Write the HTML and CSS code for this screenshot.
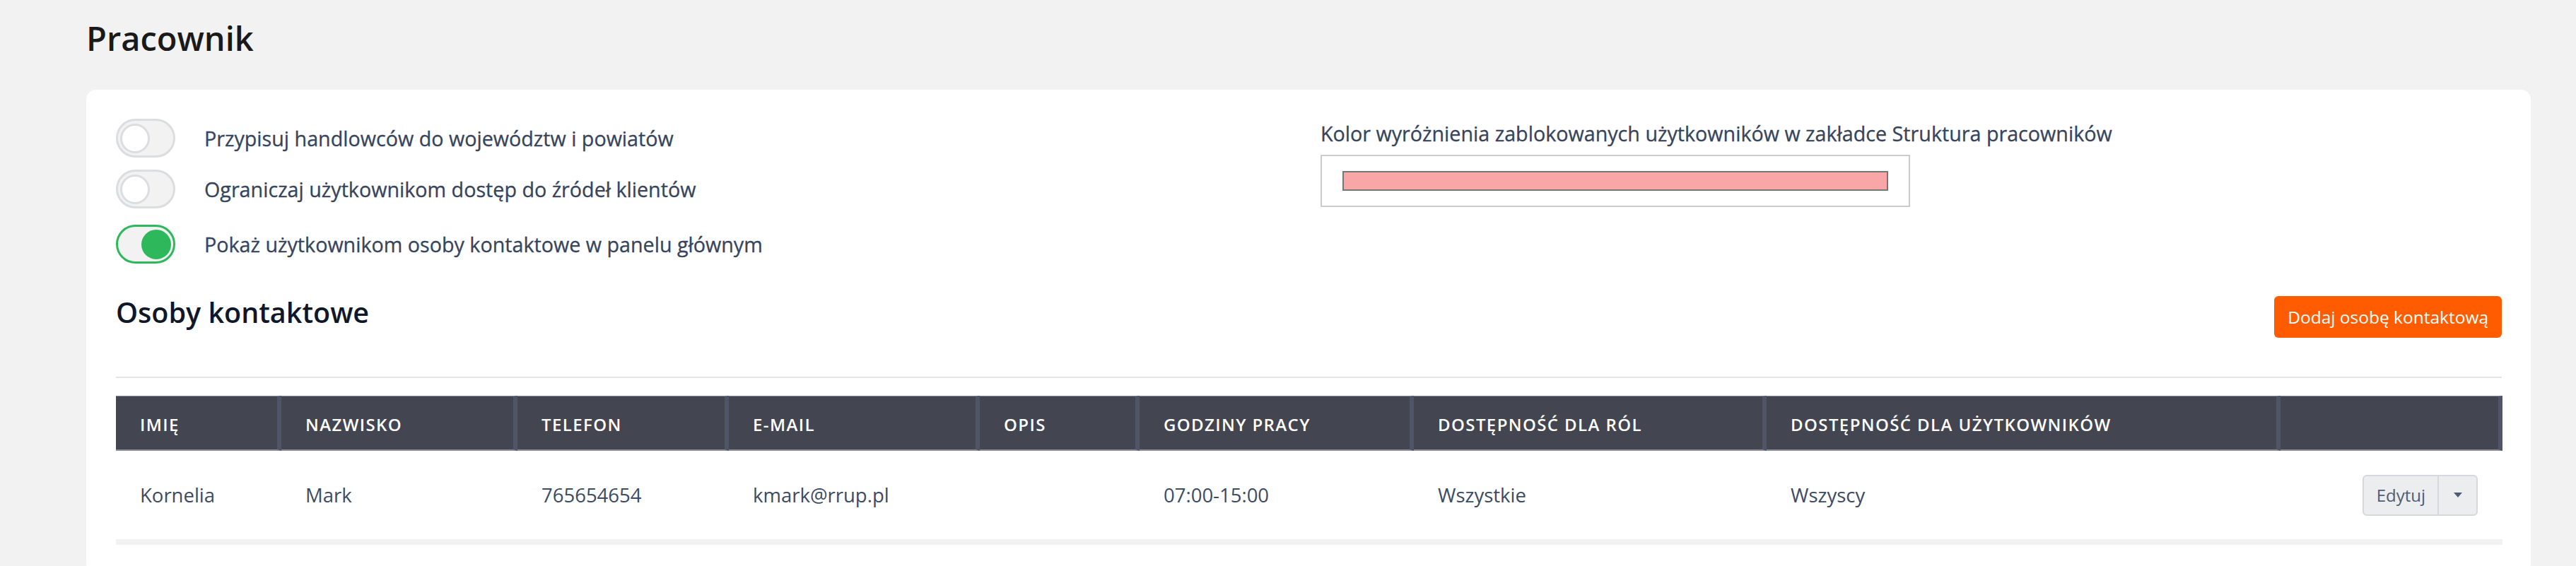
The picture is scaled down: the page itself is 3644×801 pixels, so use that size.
FILE: index.html
```html
<!DOCTYPE html>
<html lang="pl">
<head>
<meta charset="utf-8">
<title>Pracownik</title>
<link rel="stylesheet" href="styles.css">
</head>
<body>
<div class="page">
  <h1 class="title">Pracownik</h1>
  <div class="card">
    <div class="settings">
      <div class="toggles">
        <div class="toggle-row">
          <span class="switch"><span class="knob"></span></span>
          <span class="label">Przypisuj handlowców do województw i powiatów</span>
        </div>
        <div class="toggle-row">
          <span class="switch"><span class="knob"></span></span>
          <span class="label">Ograniczaj użytkownikom dostęp do źródeł klientów</span>
        </div>
        <div class="toggle-row last">
          <span class="switch on"><span class="knob"></span></span>
          <span class="label">Pokaż użytkownikom osoby kontaktowe w panelu głównym</span>
        </div>
      </div>
      <div class="color-field">
        <div class="label">Kolor wyróżnienia zablokowanych użytkowników w zakładce Struktura pracowników</div>
        <div class="color-box"><div class="swatch"></div></div>
      </div>
    </div>

    <div class="section-head">
      <h2 class="section-title">Osoby kontaktowe</h2>
      <button class="btn-add">Dodaj osobę kontaktową</button>
    </div>
    <div class="divider"></div>

    <table class="grid">
      <colgroup>
        <col class="w1"><col class="w2"><col class="w3"><col class="w4"><col class="w5"><col class="w6"><col class="w7"><col class="w8"><col class="w9">
      </colgroup>
      <thead>
        <tr>
          <th>Imię</th>
          <th>Nazwisko</th>
          <th>Telefon</th>
          <th>E-mail</th>
          <th>Opis</th>
          <th>Godziny pracy</th>
          <th>Dostępność dla ról</th>
          <th>Dostępność dla użytkowników</th>
          <th></th>
        </tr>
      </thead>
      <tbody>
        <tr>
          <td>Kornelia</td>
          <td>Mark</td>
          <td>765654654</td>
          <td>kmark@rrup.pl</td>
          <td></td>
          <td>07:00-15:00</td>
          <td>Wszystkie</td>
          <td>Wszyscy</td>
          <td class="actions">
            <span class="btn-group"><span class="btn-edit">Edytuj</span><span class="btn-caret"><span class="caret"></span></span></span>
          </td>
        </tr>
      </tbody>
    </table>
  </div>
</div>
</body>
</html>
```

FILE: styles.css
```css
html, body {
  margin: 0;
  padding: 0;
  background: #f2f2f2;
  font-family: "Open Sans", "Noto Sans", "Liberation Sans", sans-serif;
  color: #3c4b64;
}

.page {
  padding: 21px 64px 0 122px;
}

.title {
  margin: 0 0 40px 0;
  font-size: 47px;
  line-height: 66px;
  font-weight: 600;
  color: #1a1a1a;
}

.card {
  background: #ffffff;
  border-radius: 14px;
  padding: 41px 41px 40px 42px;
}

.settings {
  display: grid;
  grid-template-columns: 1704px 1fr;
}

.toggles {
  display: flex;
  flex-direction: column;
}

.toggle-row {
  display: flex;
  align-items: center;
  gap: 41px;
  height: 55px;
  margin-bottom: 17px;
}

.toggle-row.last {
  margin-top: 6px;
  margin-bottom: 0;
}

.switch {
  box-sizing: border-box;
  width: 84px;
  height: 55px;
  flex: none;
  border: 3px solid #dcdde1;
  border-radius: 28px;
  background: #f2f2f2;
  display: flex;
  align-items: center;
  padding: 0 3px;
}

.knob {
  box-sizing: border-box;
  width: 42px;
  height: 42px;
  border-radius: 50%;
  background: #ffffff;
  border: 3px solid #dcdde1;
}

.switch.on {
  border-color: #2eb85c;
  justify-content: flex-end;
}

.switch.on .knob {
  background: #2eb85c;
  border-color: #2eb85c;
}

.label {
  font-size: 28.7px;
  line-height: 40px;
  font-weight: 500;
  color: #36445c;
  white-space: nowrap;
  -webkit-text-stroke: 0.3px #36445c;
}

.color-field {
  display: flex;
  flex-direction: column;
  align-items: flex-start;
  padding-top: 1px;
}

.color-box {
  box-sizing: border-box;
  margin-top: 10px;
  width: 834px;
  height: 74px;
  border: 2px solid #cccccc;
  padding: 21px 29px;
}

.swatch {
  box-sizing: border-box;
  height: 28px;
  border: 2px solid #767676;
  background: #f9a6a6;
}

.section-head {
  display: flex;
  justify-content: space-between;
  align-items: flex-start;
  margin-top: 46px;
}

.section-title {
  margin: 0;
  font-size: 39.5px;
  line-height: 46px;
  font-weight: 600;
  color: #0f1729;
}

.btn-add {
  height: 59px;
  padding: 0 19px;
  border: none;
  border-radius: 6px;
  background: #ff5c00;
  color: #ffffff;
  font-family: inherit;
  font-size: 24.5px;
  line-height: 59px;
}

.divider {
  margin-top: 55px;
  height: 2px;
  background: #e4e5ea;
}

.grid {
  margin-top: 25px;
  width: 100%;
  table-layout: fixed;
  border-collapse: separate;
  border-spacing: 0;
}

.w1 { width: 234px; }
.w2 { width: 334px; }
.w3 { width: 299px; }
.w4 { width: 355px; }
.w5 { width: 226px; }
.w6 { width: 388px; }
.w7 { width: 499px; }
.w8 { width: 727px; }
.w9 { width: 314px; }

.grid th {
  background: #434551;
  color: #ffffff;
  text-align: left;
  text-transform: uppercase;
  font-size: 24px;
  font-weight: 600;
  letter-spacing: 1.4px;
  line-height: 30px;
  padding: 25px 33px 20px 34px;
  border-top: 1px solid #8b8d96;
  border-bottom: 2px solid #8b8d96;
  border-right: 6px solid #4f5567;
  white-space: nowrap;
}

.grid td {
  height: 125px;
  padding: 0 33px 0 34px;
  vertical-align: middle;
  font-size: 27.5px;
  line-height: 38px;
  color: #3c4b64;
  border-bottom: 8px solid #f2f2f2;
  white-space: nowrap;
}

.grid td.actions {
  text-align: right;
  padding-right: 35px;
}

.btn-group {
  display: inline-flex;
  box-sizing: border-box;
  height: 58px;
  border: 2px solid #d5d8dd;
  border-radius: 6px;
  background: #ebedef;
  vertical-align: middle;
}

.btn-edit {
  display: flex;
  align-items: center;
  padding: 0 17px 0 18px;
  font-size: 24px;
  color: #4f5d73;
  border-right: 2px solid #d5d8dd;
}

.btn-caret {
  display: flex;
  align-items: center;
  justify-content: center;
  width: 53px;
}

.caret {
  width: 0;
  height: 0;
  border-left: 6px solid transparent;
  border-right: 6px solid transparent;
  border-top: 7px solid #4f5d73;
}
```
